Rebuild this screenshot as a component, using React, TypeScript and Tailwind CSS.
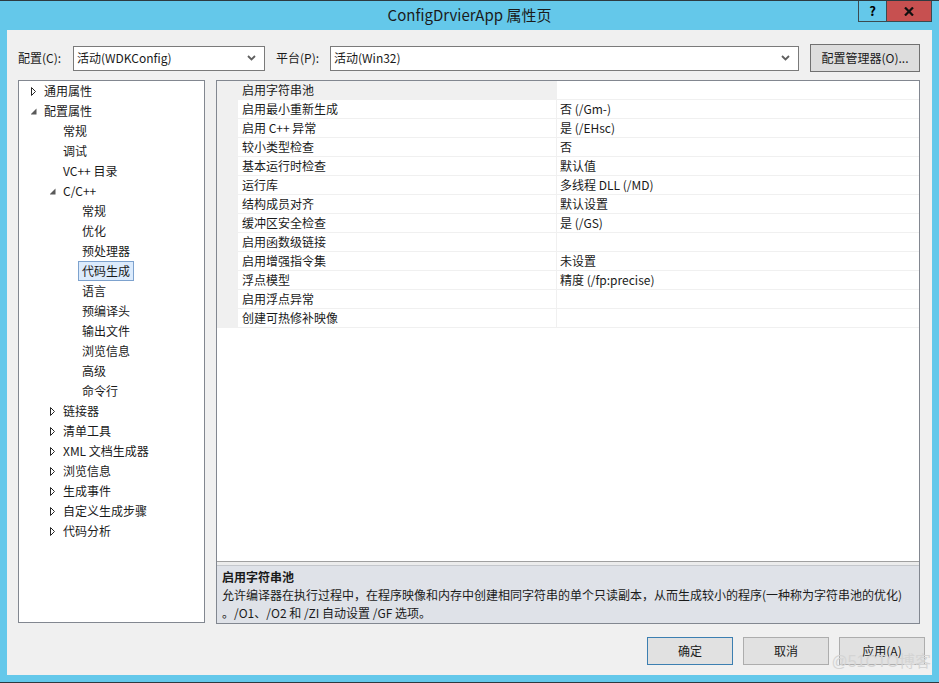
import React from 'react';

type TreeItem = {
  label: string;
  level: number;
  arrow?: 'collapsed' | 'expanded';
  selected?: boolean;
};

const treeItems: TreeItem[] = [
  { label: '通用属性', level: 0, arrow: 'collapsed' },
  { label: '配置属性', level: 0, arrow: 'expanded' },
  { label: '常规', level: 1 },
  { label: '调试', level: 1 },
  { label: 'VC++ 目录', level: 1 },
  { label: 'C/C++', level: 1, arrow: 'expanded' },
  { label: '常规', level: 2 },
  { label: '优化', level: 2 },
  { label: '预处理器', level: 2 },
  { label: '代码生成', level: 2, selected: true },
  { label: '语言', level: 2 },
  { label: '预编译头', level: 2 },
  { label: '输出文件', level: 2 },
  { label: '浏览信息', level: 2 },
  { label: '高级', level: 2 },
  { label: '命令行', level: 2 },
  { label: '链接器', level: 1, arrow: 'collapsed' },
  { label: '清单工具', level: 1, arrow: 'collapsed' },
  { label: 'XML 文档生成器', level: 1, arrow: 'collapsed' },
  { label: '浏览信息', level: 1, arrow: 'collapsed' },
  { label: '生成事件', level: 1, arrow: 'collapsed' },
  { label: '自定义生成步骤', level: 1, arrow: 'collapsed' },
  { label: '代码分析', level: 1, arrow: 'collapsed' },
];

const properties: [string, string][] = [
  ['启用字符串池', ''],
  ['启用最小重新生成', '否 (/Gm-)'],
  ['启用 C++ 异常', '是 (/EHsc)'],
  ['较小类型检查', '否'],
  ['基本运行时检查', '默认值'],
  ['运行库', '多线程 DLL (/MD)'],
  ['结构成员对齐', '默认设置'],
  ['缓冲区安全检查', '是 (/GS)'],
  ['启用函数级链接', ''],
  ['启用增强指令集', '未设置'],
  ['浮点模型', '精度 (/fp:precise)'],
  ['启用浮点异常', ''],
  ['创建可热修补映像', ''],
];

const indent = ['pl-[12px]', 'pl-[31px]', 'pl-[50px]'];

function Arrow({ kind }: { kind?: 'collapsed' | 'expanded' }) {
  if (kind === 'collapsed') {
    return (
      <svg width="13" height="9" viewBox="0 0 13 9" className="shrink-0">
        <polygon points="0.5,0.5 4.5,4.5 0.5,8.5" fill="none" stroke="#262626" strokeWidth="1" />
      </svg>
    );
  }
  if (kind === 'expanded') {
    return (
      <svg width="13" height="9" viewBox="0 0 13 9" className="shrink-0">
        <polygon points="5.5,1.5 5.5,7.5 -0.5,7.5" fill="#595959" />
      </svg>
    );
  }
  return <span className="w-[13px] shrink-0" />;
}

function Chevron() {
  return (
    <svg width="9" height="6" viewBox="0 0 9 6">
      <polyline points="1,1 4.5,4.5 8,1" fill="none" stroke="#5f5f5f" strokeWidth="1.8" />
    </svg>
  );
}

function Select({ value, width }: { value: string; width: string }) {
  return (
    <div className={`${width} h-[25px] bg-white border border-[#7a7a7a] flex items-center pl-[3px] pr-[8px]`}>
      <span className="flex-1">{value}</span>
      <Chevron />
    </div>
  );
}

export default function App() {
  return (
    <div className="w-[939px] h-[683px] bg-[#64c8ea] border-y border-[#2d3a40] flex flex-col text-[12px] text-[#1a1a1a] font-['Noto_Sans_CJK_SC',sans-serif] relative overflow-hidden">
      {/* title bar */}
      <div className="h-[29px] relative flex items-center justify-center">
        <span className="text-[15px] text-[#1b1b1b] -mt-[1px]">ConfigDrvierApp 属性页</span>
        <div className="absolute right-[7px] -top-[1px] flex h-[22px]">
          <div className="w-[28px] border border-r-0 border-[#3b4a50] flex items-center justify-center text-[13px] font-bold text-black">?</div>
          <div className="w-[46px] border border-[#3b4a50] bg-[#c75050] flex items-center justify-center">
            <svg width="10" height="9" viewBox="0 0 10 9">
              <path d="M1 0.5 L9 8.5 M9 0.5 L1 8.5" stroke="#101010" strokeWidth="2.2" />
            </svg>
          </div>
        </div>
      </div>

      {/* client area */}
      <div className="mx-[7px] h-[645px] bg-[#f0f0f0] flex flex-col px-[11px] pt-[14px]">
        <div className="h-[28px] flex items-center">
          <span className="w-[55px]">配置(C):</span>
          <Select value="活动(WDKConfig)" width="w-[192px]" />
          <span className="w-[54px] ml-[11px]">平台(P):</span>
          <Select value="活动(Win32)" width="w-[469px]" />
          <div className="ml-[11px] w-[110px] h-[28px] border border-[#707070] bg-[#dddddd] flex items-center justify-center">
            配置管理器(O)...
          </div>
        </div>

        <div className="mt-[8px] h-[544px] flex gap-[11px]">
          {/* tree */}
          <div className="w-[187px] h-[543px] border border-[#828790] bg-white flex flex-col">
            {treeItems.map((item, i) => (
              <div key={i} className={`h-[20px] flex items-center ${indent[item.level]}`}>
                <Arrow kind={item.arrow} />
                <span
                  className={
                    item.selected
                      ? '-ml-[4px] h-[20px] px-[3px] flex items-center border border-[#7da2ce] bg-[#dcebfc]'
                      : ''
                  }
                >
                  {item.label}
                </span>
              </div>
            ))}
          </div>

          {/* property grid */}
          <div className="w-[704px] border border-[#828790] flex flex-col">
            <div className="flex-1 bg-white flex flex-col">
              {properties.map(([name, value], i) => (
                <div key={i} className="h-[19px] flex">
                  <div className="w-[21px] bg-[#f0f0f0]" />
                  <div
                    className={`w-[319px] border-b border-r border-[#f0f0f0] pl-[4px] flex items-center ${
                      i === 0 ? 'bg-[#f0f0f0]' : ''
                    }`}
                  >
                    {name}
                  </div>
                  <div className="flex-1 border-b border-[#f0f0f0] pl-[3px] flex items-center">{value}</div>
                </div>
              ))}
            </div>
            <div className="h-[4px] border-t border-[#a0a0a0] bg-[#ececec]" />
            <div className="h-[58px] bg-[#dfe2e8] border-t border-[#c4c7cc] px-[5px] pt-[2px] leading-[18px]">
              <div className="font-bold">启用字符串池</div>
              <div>允许编译器在执行过程中，在程序映像和内存中创建相同字符串的单个只读副本，从而生成较小的程序(一种称为字符串池的优化)</div>
              <div>。/O1、/O2 和 /ZI 自动设置 /GF 选项。</div>
            </div>
          </div>
        </div>

        <div className="mt-[13px] flex justify-end gap-[10px] mr-[-4px]">
          <div className="w-[86px] h-[28px] border border-[#3c7fb1] bg-[#e1e1e1] flex items-center justify-center">确定</div>
          <div className="w-[86px] h-[28px] border border-[#adadad] bg-[#e1e1e1] flex items-center justify-center">取消</div>
          <div className="w-[86px] h-[28px] border border-[#adadad] bg-[#e1e1e1] flex items-center justify-center">应用(A)</div>
        </div>
      </div>

      <span className="absolute right-[8px] bottom-[8px] text-[16px] text-[#d4d4d4] font-['Liberation_Sans','Noto_Sans_CJK_SC',sans-serif] pointer-events-none">
        @51CTO博客
      </span>
    </div>
  );
}
